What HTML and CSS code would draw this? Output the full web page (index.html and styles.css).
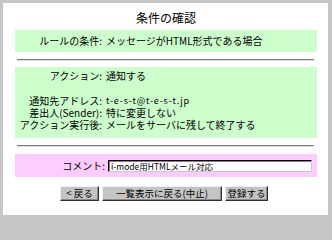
FILE: index.html
```html
<!DOCTYPE html>
<html lang="ja">
<head>
<meta charset="utf-8">
<title>条件の確認</title>
<link rel="stylesheet" href="styles.css">
</head>
<body>
<div class="page">
  <div class="title">条件の確認</div>
  <div class="panel green cond">
    <div class="row"><span class="lbl">ルールの条件:</span><span class="val">メッセージがHTML形式である場合</span></div>
  </div>
  <div class="rule"></div>
  <div class="panel green action">
    <div class="row first"><span class="lbl">アクション:</span><span class="val">通知する</span></div>
    <div class="row gapped"><span class="lbl">通知先アドレス:</span><span class="val small">t-e-s-t@t-e-s-t.jp</span></div>
    <div class="row"><span class="lbl">差出人(Sender):</span><span class="val">特に変更しない</span></div>
    <div class="row"><span class="lbl">アクション実行後:</span><span class="val">メールをサーバに残して終了する</span></div>
  </div>
  <div class="rule second"></div>
  <div class="panel pink">
    <div class="row comment"><span class="lbl">コメント:</span><span class="field">i-mode用HTMLメール対応</span></div>
  </div>
  <div class="buttons">
    <span class="btn b-back">&lt; 戻る</span>
    <span class="btn b-list">一覧表示に戻る(中止)</span>
    <span class="btn b-save">登録する</span>
  </div>
</div>
</body>
</html>
```
FILE: styles.css
```css
html, body {
  margin: 0;
  padding: 0;
  background: #c6c6c6;
}
body {
  font-family: "Noto Sans CJK JP", "Noto Sans", sans-serif;
  color: #000;
  font-size: 10px;
  padding-top: 3px;
}
.page {
  margin: 0 0 0 3px;
  width: 325px;
  height: 212px;
  background: #fff;
  padding: 0 11px 0 12px;
  box-sizing: border-box;
}
.title {
  padding-top: 3px;
  height: 24px;
  line-height: 24px;
  font-size: 12px;
  text-align: center;
}
.panel {
  width: 302px;
}
.green { background: #ccffcc; }
.pink { background: #ffccff; }
.row {
  display: grid;
  grid-template-columns: 87px 1fr;
  column-gap: 4px;
  line-height: 12px;
  height: 12px;
  font-size: 10px;
  white-space: nowrap;
}
.lbl { text-align: right; }
.cond {
  height: 22px;
  padding-top: 5px;
  box-sizing: border-box;
}
.rule {
  margin: 7px 3px 6px 2px;
  height: 0;
  border-top: 1px solid #7c7c7c;
  border-bottom: 1px solid #dcdcdc;
}
.rule.second { margin-bottom: 7px; }
.action {
  height: 71px;
  padding-top: 3px;
  box-sizing: border-box;
}
.action .gapped { margin-top: 13px; }
.small { font-size: 9px; letter-spacing: 0.8px; }
.pink {
  height: 23px;
  padding-top: 6px;
  box-sizing: border-box;
}
.comment {
  grid-template-columns: 90px 204px;
  column-gap: 3px;
}
.field {
  display: block;
  height: 12px;
  box-sizing: border-box;
  background: #fff;
  border-top: 1px solid #000;
  border-left: 1px solid #000;
  border-right: 1px solid #c8c8c8;
  border-bottom: 1px solid #c8c8c8;
  box-shadow: inset 1px 1px 0 #808080;
  font-size: 8.5px;
  line-height: 10px;
  padding-left: 2px;
  overflow: hidden;
}
.buttons {
  display: flex;
  gap: 3px;
  margin-top: 9px;
  padding-left: 45px;
}
.btn {
  display: block;
  height: 15px;
  box-sizing: border-box;
  background: #c4c4c4;
  border-top: 1px solid #f0f0f0;
  border-left: 1px solid #f0f0f0;
  border-right: 1px solid #303030;
  border-bottom: 1px solid #303030;
  box-shadow: inset -1px -1px 0 #8a8a8a;
  font-size: 9.5px;
  line-height: 13px;
  text-align: center;
  white-space: nowrap;
}
.b-back { width: 39px; }
.b-list { width: 120px; }
.b-save { width: 43px; }
```
